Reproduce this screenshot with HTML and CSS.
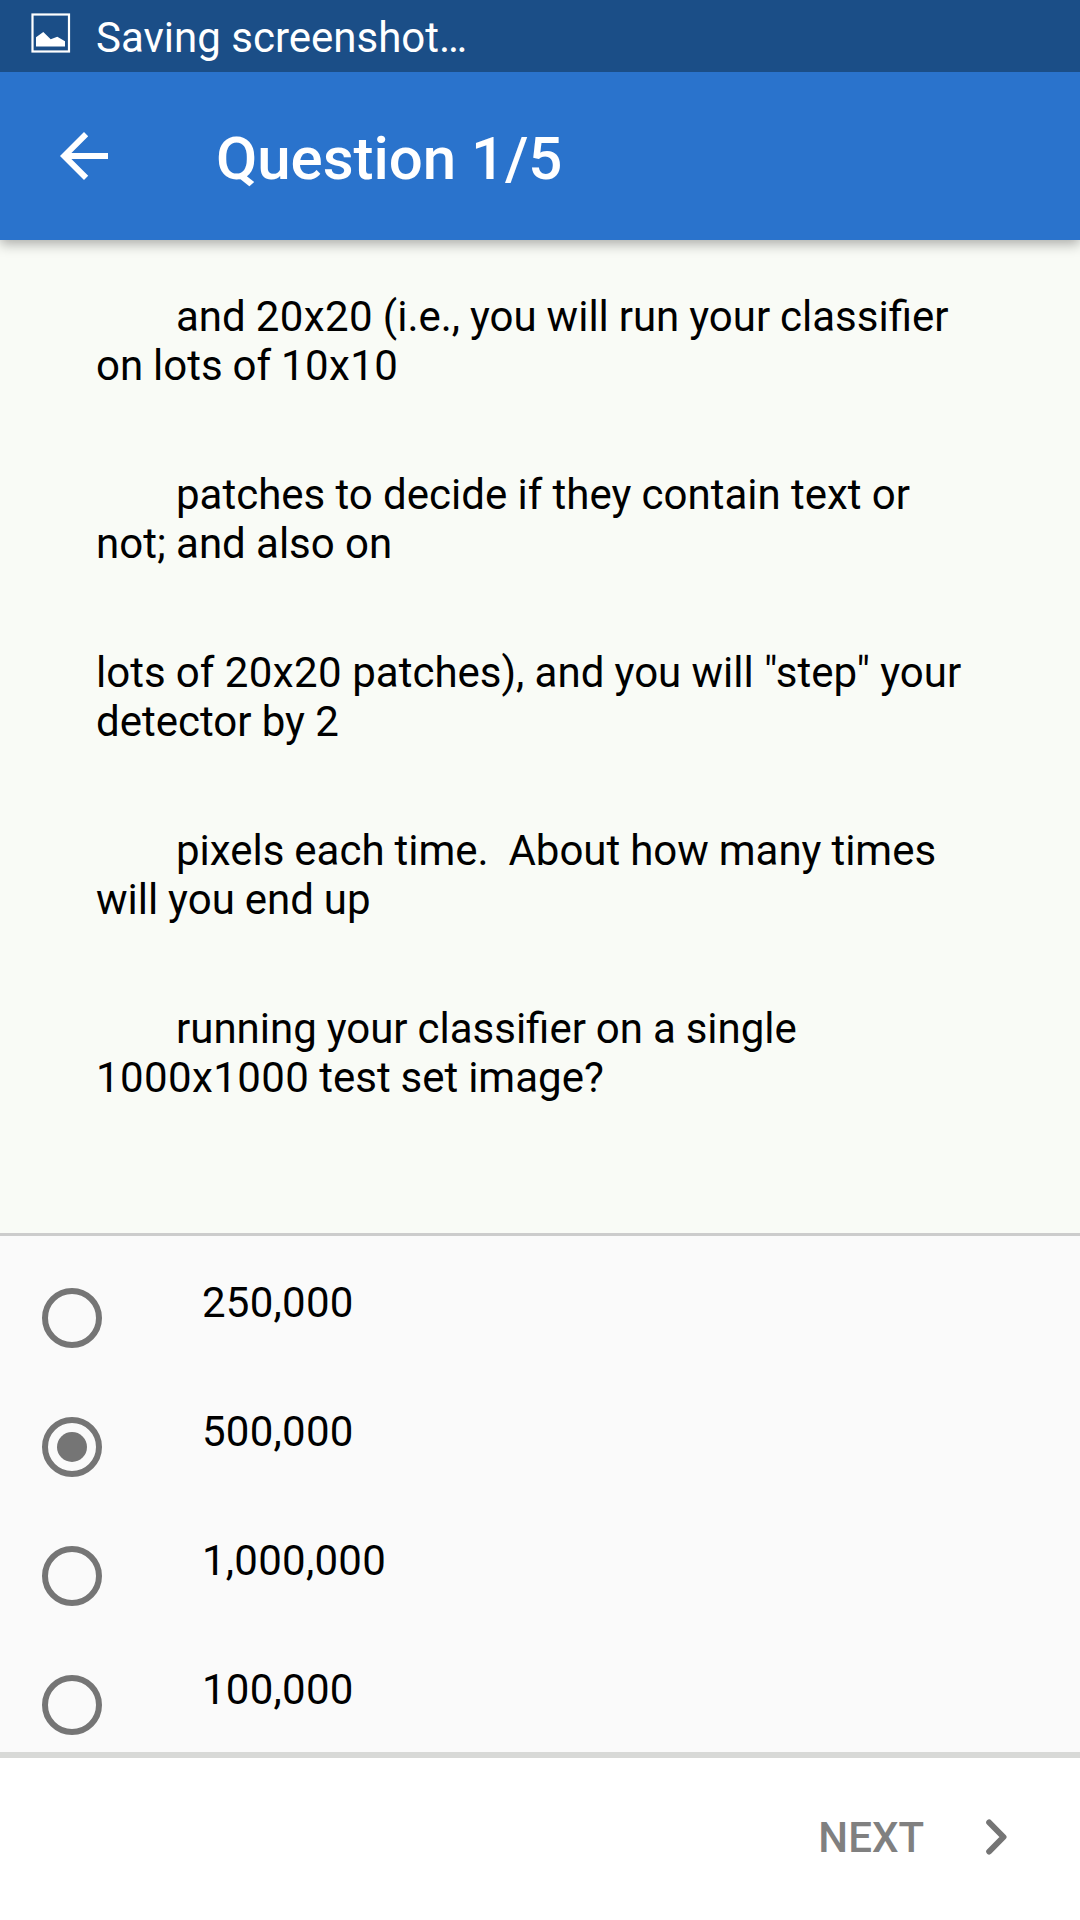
FILE: index.html
```html
<!DOCTYPE html>
<html lang="en">
<head>
<meta charset="utf-8">
<title>Question 1/5</title>
<link rel="stylesheet" href="styles.css">
</head>
<body>
<div class="status">
  <svg class="status-icon" width="40" height="40" viewBox="0 0 40 40"><rect x="1.500" y="1.500" width="36.500" height="37" fill="none" stroke="#fff" stroke-width="2.200"/><path d="M5 33.500V24.300L12.300 19l7.400 7.300 6.600-2.600 7.700 4.600v5.200z" fill="#fff"/></svg>
  <span>Saving screenshot…</span>
</div>
<header class="appbar">
  <svg class="back" width="48" height="48" viewBox="0 0 48 48"><path d="M48 21H11.400L28.200 4.200 24 0 0 24l24 24 4.200-4.200L11.400 27H48z" fill="#fff"/></svg>
  <h1>Question 1/5</h1>
</header>
<main class="question">
  <p class="indent tight">and <span class="num">20x20</span> (i.e., you will run your classifier<br>on lots of <span class="num">10x10</span></p>
  <p class="indent">patches to decide if they contain text or<br>not; and also on</p>
  <p>lots of <span class="num">20x20</span> patches), and you will "step" your<br>detector by 2</p>
  <p class="indent tight">pixels each time.&nbsp; About how many times<br>will you end up</p>
  <p class="indent tight">running your classifier on a single<br><span class="num">1000x1000</span> test set image?</p>
</main>
<section class="answers">
  <div class="answer"><span class="radio"></span><span class="label">250,000</span></div>
  <div class="answer"><span class="radio checked"></span><span class="label">500,000</span></div>
  <div class="answer"><span class="radio"></span><span class="label">1,000,000</span></div>
  <div class="answer"><span class="radio"></span><span class="label">100,000</span></div>
</section>
<footer class="footer">
  <span class="next">NEXT</span>
  <svg class="chevron" width="21" height="36" viewBox="0 0 21 36"><path d="M3.200 3.500L17.500 18 3.200 32.500" fill="none" stroke="#757575" stroke-width="6" stroke-linecap="round" stroke-linejoin="round"/></svg>
</footer>
</body>
</html>
```
FILE: styles.css
```css
* { box-sizing: border-box; }
body { margin: 0; width: 1080px; height: 1920px; overflow: hidden; display: flex; flex-direction: column; font-family: Roboto, sans-serif; color: #000; background: #fafafa; }
.status { height: 72px; flex: none; z-index: 2; background: #1b4e87; color: #fff; display: flex; align-items: center; gap: 25px; padding: 2px 0 0 31px; font-size: 42px; }
.status-icon { align-self: flex-start; margin-top: 11px; }
.appbar { height: 168px; flex: none; background: #2a73cc; color: #fff; display: flex; align-items: center; padding-left: 60px; gap: 108px; box-shadow: 0 4px 12px rgba(0,0,0,.32); z-index: 1; }
.appbar h1 { margin: 4px 0 0; font-size: 60px; font-weight: 500; letter-spacing: -.05px; }
.question { height: 996px; flex: none; background: #f9fbf6; border-bottom: 3px solid #ccc; padding: 52px 0 0 96px; }
.question p { margin: 0 0 80px; font-size: 42px; line-height: 49px; word-spacing: -.15px; }
.question .indent { text-indent: 80px; }
.question .tight { word-spacing: -.5px; }
.num { letter-spacing: .4px; }
.answers { height: 516px; flex: none; padding-top: 17px; overflow: hidden; }
.answer { height: 129px; display: flex; align-items: center; padding-left: 42px; }
.radio { width: 60px; height: 60px; border: 6px solid #757575; border-radius: 50%; display: flex; align-items: center; justify-content: center; }
.checked::after { content: ""; width: 30px; height: 30px; border-radius: 50%; background: #757575; }
.label { margin: -30px 0 0 100px; font-size: 42px; letter-spacing: .25px; }
.footer { flex: 1; background: #fff; border-top: 6px solid #d8d9d7; display: flex; align-items: center; justify-content: flex-end; gap: 62px; padding: 0 73px 5px 0; }
.next { padding-top: 2px; font-size: 42px; font-weight: 500; color: #808080; }
```
